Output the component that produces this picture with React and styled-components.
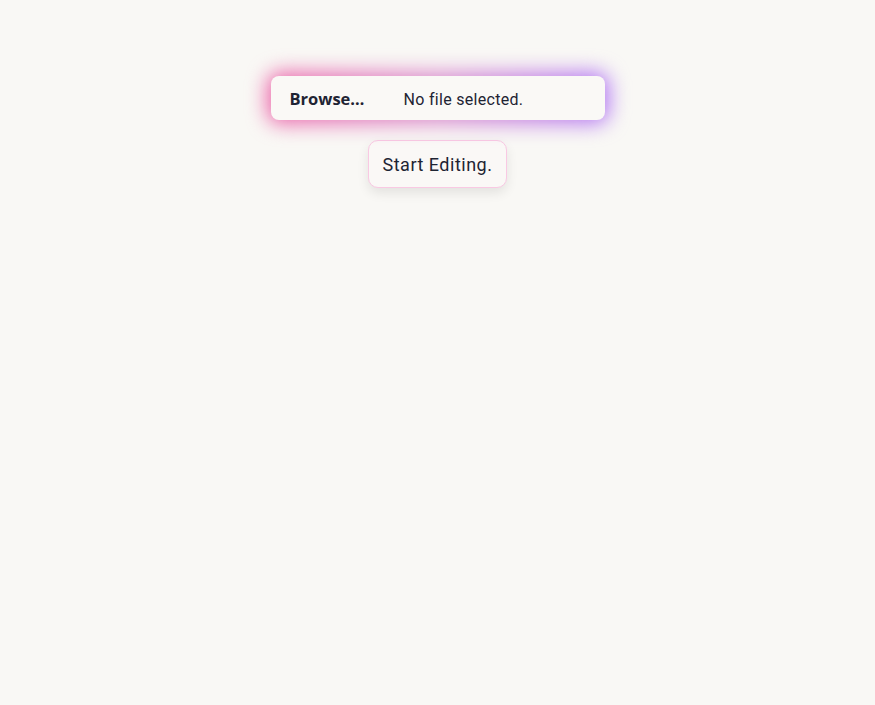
import React from "react";
import styled, { createGlobalStyle } from "styled-components";

const GlobalStyle = createGlobalStyle`
  html, body {
    margin: 0;
    padding: 0;
    background-color: #f9f8f5;
  }
  body {
    font-family: Roboto, "Liberation Sans", sans-serif;
    color: #1e2433;
  }
`;

const Page = styled.main`
  display: flex;
  flex-direction: column;
  align-items: center;
  padding-top: 76px;
  gap: 20px;
  min-height: 705px;
  box-sizing: border-box;
`;

const Glow = styled.div`
  position: relative;
  width: 334px;

  &::before {
    content: "";
    position: absolute;
    inset: -4px;
    border-radius: 14px;
    background: linear-gradient(90deg, #ec64a8 0%, #d98ccd 50%, #b177f5 100%);
    filter: blur(10px);
  }
`;

const FileBox = styled.label`
  position: relative;
  display: flex;
  align-items: center;
  height: 44px;
  padding: 0 19px;
  box-sizing: border-box;
  border-radius: 8px;
  background-color: #faf9f6;
  cursor: pointer;
`;

const HiddenInput = styled.input`
  display: none;
`;

const BrowseText = styled.span`
  font-family: "Open Sans", sans-serif;
  font-weight: 700;
  font-size: 16.5px;
  color: #1e2433;
  margin-right: 39px;
  padding-top: 1px;
`;

const FileName = styled.span`
  font-size: 16px;
  letter-spacing: 0.3px;
  color: #1e2433;
  padding-top: 2px;
`;

const StartButton = styled.button`
  font-family: Roboto, "Liberation Sans", sans-serif;
  font-size: 18px;
  letter-spacing: 0.5px;
  color: #1e2433;
  background-color: #faf8f6;
  border: 1px solid #f9c9e3;
  border-radius: 10px;
  height: 48px;
  padding: 0 14px;
  box-shadow: 0 5px 12px rgba(0, 0, 0, 0.09);
  cursor: pointer;
`;

export default function App() {
  return (
    <>
      <GlobalStyle />
      <Page>
        <Glow>
          <FileBox>
            <HiddenInput type="file" />
            <BrowseText>Browse…</BrowseText>
            <FileName>No file selected.</FileName>
          </FileBox>
        </Glow>
        <StartButton>Start Editing.</StartButton>
      </Page>
    </>
  );
}
